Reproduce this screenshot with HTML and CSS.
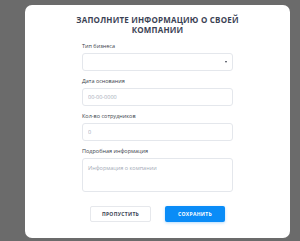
FILE: index.html
```html
<!DOCTYPE html>
<html lang="ru">

<head>
    <meta charset="UTF-8">
    <meta name="viewport" content="width=device-width, initial-scale=1.0">
    <title>Информация о компании</title>
    <link rel="stylesheet" href="styles.css">
</head>

<body>
    <div class="modal">
        <h2 class="modal-title">Заполните информацию о своей компании</h2>

        <form class="company-form" action="#" method="post">
            <div class="field">
                <label for="type">Тип бизнеса</label>
                <div class="select-box" id="type">
                    <span class="arrow"></span>
                </div>
            </div>

            <div class="field">
                <label for="date">Дата основания</label>
                <input type="text" id="date" placeholder="00-00-0000">
            </div>

            <div class="field">
                <label for="staff">Кол-во сотрудников</label>
                <input type="text" id="staff" placeholder="0">
            </div>

            <div class="field">
                <label for="about">Подробная информация</label>
                <textarea id="about" placeholder="Информация о компании"></textarea>
            </div>

            <div class="buttons">
                <button type="button" class="btn btn-skip">Пропустить</button>
                <button type="submit" class="btn btn-save">Сохранить</button>
            </div>
        </form>
    </div>
</body>

</html>
```

FILE: styles.css
```css
body {
    margin: 0;
    padding: 0;
    background-color: #6b6b6b;
    font-family: "Open Sans", Arial, sans-serif;
    height: 241px;
    overflow: hidden;
}

.modal {
    box-sizing: border-box;
    width: 265px;
    height: 233px;
    margin: 5px 0 0 25px;
    padding-top: 10px;
    background-color: #fff;
    border-radius: 7px;
}

.modal-title {
    width: 165px;
    margin: 0 auto;
    font-size: 8px;
    line-height: 10px;
    font-weight: 700;
    letter-spacing: 0.2px;
    text-transform: uppercase;
    text-align: center;
    color: #3b4254;
}

.company-form {
    width: 151px;
    margin: 7px auto 0;
    display: flex;
    flex-direction: column;
    gap: 6px;
}

.field {
    display: flex;
    flex-direction: column;
}

.field label {
    font-size: 5.5px;
    line-height: 8px;
    margin-bottom: 3px;
    color: #3a3f4b;
}

.field input,
.field textarea,
.select-box {
    box-sizing: border-box;
    width: 100%;
    height: 18px;
    margin: 0;
    padding: 0 5px;
    border: 1px solid #e4e7ec;
    border-radius: 3px;
    font-family: inherit;
    font-size: 5.5px;
    color: #3a3f4b;
    outline: none;
    background: #fff;
}

.field textarea {
    height: 34px;
    padding: 5px;
    resize: none;
}

.field input::placeholder,
.field textarea::placeholder {
    color: #a3aab6;
}

.select-box {
    display: flex;
    align-items: center;
    justify-content: flex-end;
    padding-right: 5px;
}

.arrow {
    width: 0;
    height: 0;
    border-left: 1.5px solid transparent;
    border-right: 1.5px solid transparent;
    border-top: 2px solid #3a3f4b;
}

.buttons {
    display: flex;
    justify-content: center;
    gap: 14px;
    margin-top: 8px;
}

.btn {
    box-sizing: border-box;
    width: 61px;
    height: 16px;
    padding: 0;
    border-radius: 2px;
    font-family: inherit;
    font-size: 5px;
    font-weight: 700;
    letter-spacing: 0.3px;
    text-transform: uppercase;
    cursor: pointer;
}

.btn-skip {
    background-color: #fff;
    border: 1px solid #e6e8ec;
    color: #3b4254;
}

.btn-save {
    width: 60px;
    background-color: #0a8cf7;
    border: none;
    color: #fff;
    box-shadow: 0 1px 3px rgba(10, 140, 247, 0.3);
}
```
